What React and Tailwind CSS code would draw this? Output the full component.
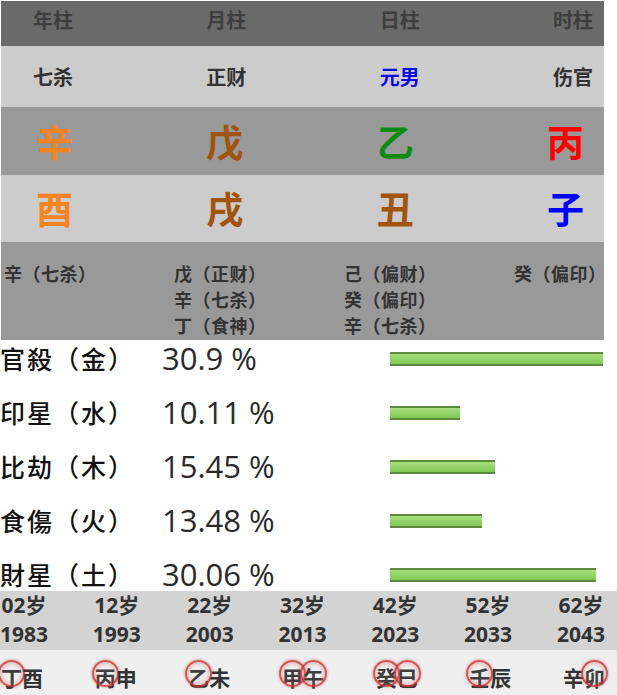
import React from 'react';

const cjk = { fontFamily: '"Noto Sans CJK SC", sans-serif' };
const mixed = { fontFamily: '"Noto Sans", "Noto Sans CJK SC", sans-serif' };

const headers = ['年柱', '月柱', '日柱', '时柱'];
const gods = [
  { t: '七杀', c: 'text-[#333]' },
  { t: '正财', c: 'text-[#333]' },
  { t: '元男', c: 'text-[#0a0ae6]' },
  { t: '伤官', c: 'text-[#333]' },
];
const stems = [
  { t: '辛', c: 'text-[#f5831f]' },
  { t: '戊', c: 'text-[#a0540c]' },
  { t: '乙', c: 'text-[#0c8a10]' },
  { t: '丙', c: 'text-[#ff0000]' },
];
const branches = [
  { t: '酉', c: 'text-[#f5831f]' },
  { t: '戌', c: 'text-[#a0540c]' },
  { t: '丑', c: 'text-[#a0540c]' },
  { t: '子', c: 'text-[#0000ff]' },
];
const hidden = [
  ['辛（七杀）'],
  ['戊（正财）', '辛（七杀）', '丁（食神）'],
  ['己（偏财）', '癸（偏印）', '辛（七杀）'],
  ['癸（偏印）'],
];

// last row is cut by the luck band, as in the original
const elements = [
  { name: '官殺（金）', pct: '30.9 %', w: 213, h: 'h-[54px]' },
  { name: '印星（水）', pct: '10.11 %', w: 70, h: 'h-[54px]' },
  { name: '比劫（木）', pct: '15.45 %', w: 105, h: 'h-[54px]' },
  { name: '食傷（火）', pct: '13.48 %', w: 92, h: 'h-[54px]' },
  { name: '財星（土）', pct: '30.06 %', w: 206, h: 'h-[35px] overflow-hidden' },
];

const luck = [
  { age: '02岁', year: '1983', gz: [['丁', true], ['酉', false]] },
  { age: '12岁', year: '1993', gz: [['丙', true], ['申', false]] },
  { age: '22岁', year: '2003', gz: [['乙', true], ['未', false]] },
  { age: '32岁', year: '2013', gz: [['甲', true], ['午', true]] },
  { age: '42岁', year: '2023', gz: [['癸', true], ['巳', true]] },
  { age: '52岁', year: '2033', gz: [['壬', true], ['辰', false]] },
  { age: '62岁', year: '2043', gz: [['辛', false], ['卯', true]] },
];

function Ring({ ch, on }) {
  return (
    <span className="relative inline-block w-[21px] h-[21px] leading-[21px]">
      {ch}
      {on && (
        <span className="absolute left-[-3px] top-[-7px] w-[27px] h-[27px] rounded-full border-2 border-[rgba(200,50,50,0.75)] bg-[radial-gradient(circle,rgba(255,255,255,0.05)_40%,rgba(214,80,80,0.5)_100%)] shadow-[0_0_3px_rgba(200,60,60,0.6)]" />
      )}
    </span>
  );
}

export default function App() {
  return (
    <div className="w-[617px] h-[695px] bg-white overflow-hidden flex flex-col" style={cjk}>
      <div className="w-[603px] ml-[1px] mt-[1px] flex flex-col">
        {/* pillar headers */}
        <div className="h-[45px] bg-[#6a6a6a] flex justify-between pl-[32px] pr-[11px] pt-[7px]">
          {headers.map((h) => (
            <span key={h} className="text-[20px] font-bold leading-[24px] text-[#3e3e3e]">
              {h}
            </span>
          ))}
        </div>
        <div className="h-[61px] bg-[#cccccc] flex items-center justify-between pl-[32px] pr-[11px]">
          {gods.map((g) => (
            <span key={g.t} className={`text-[20px] font-bold ${g.c}`}>
              {g.t}
            </span>
          ))}
        </div>
        <div className="h-[68px] bg-[#999999] flex items-center justify-between pl-[35px] pr-[20px]">
          {stems.map((s) => (
            <span key={s.t} className={`text-[37px] font-bold leading-none ${s.c}`}>
              {s.t}
            </span>
          ))}
        </div>
        <div className="h-[67px] bg-[#cccccc] flex items-center justify-between pl-[35px] pr-[20px]">
          {branches.map((s) => (
            <span key={s.t} className={`text-[37px] font-bold leading-none ${s.c}`}>
              {s.t}
            </span>
          ))}
        </div>
        <div className="h-[98px] bg-[#999999] grid grid-cols-[170px_170px_170px_1fr] pl-[3px] pt-[18px]">
          {hidden.map((col, i) => (
            <div key={i} className="flex flex-col">
              {col.map((line) => (
                <span key={line} className="text-[18px] font-bold leading-[26px] tracking-[0.5px] text-[#333]">
                  {line}
                </span>
              ))}
            </div>
          ))}
        </div>
      </div>

      {/* five elements */}
      <div className="flex flex-col">
        {elements.map((e) => (
          <div key={e.name} className={`${e.h} shrink-0 flex items-start`}>
            <span className="w-[162px] shrink-0 text-[25px] font-medium leading-[36px] tracking-[2px] text-[#111]">
              {e.name}
            </span>
            <span
              className="w-[228px] shrink-0 text-[31px] leading-[36px] text-[#2a2a2a]"
              style={{ fontFamily: '"Open Sans", "Noto Sans", sans-serif' }}
            >
              {e.pct}
            </span>
            <div
              className="mt-[12px] h-[14px] border-y-2 border-[#5b8a3c] bg-[linear-gradient(to_bottom,#a6df7e,#80c756)]"
              style={{ width: e.w }}
            />
          </div>
        ))}
      </div>

      {/* luck pillars */}
      <div className="h-[59px] bg-[#d3d3d3] flex justify-between pr-[12px]" style={mixed}>
        {luck.map((l) => (
          <div key={l.year} className="flex flex-col items-center text-[21px] font-bold leading-[29px] text-[#333]">
            <span>{l.age}</span>
            <span>{l.year}</span>
          </div>
        ))}
      </div>
      <div className="flex-1 bg-[#efefef] flex justify-between pl-[1px] pr-[12px] pt-[17px]">
        {luck.map((l) => (
          <div key={l.year} className="flex text-[21px] font-bold text-[#333]">
            {l.gz.map(([ch, on]) => (
              <Ring key={ch} ch={ch} on={on} />
            ))}
          </div>
        ))}
      </div>
    </div>
  );
}
